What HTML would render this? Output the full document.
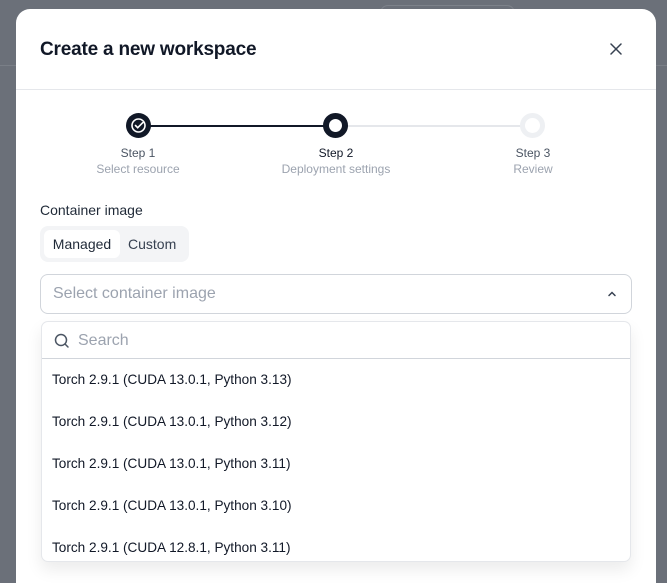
<!DOCTYPE html>
<html><head><style>
*{box-sizing:border-box;margin:0;padding:0}
html{overflow:hidden;width:667px;height:583px}
body{width:667px;height:583px;overflow:hidden;background:#6b7079;font-family:"Liberation Sans",sans-serif;position:relative}
.bgline{position:absolute;left:0;right:0;top:65px;height:1px;background:#7a7f87}
.bgbtn{position:absolute;left:380px;top:5px;width:135px;height:40px;border:1px solid #7d828a;border-radius:8px}
.modal{position:absolute;left:16px;top:9px;width:640px;height:574px;background:#fff;border-radius:14px 14px 0 0}
h1{position:absolute;left:24px;top:30px;font-size:19px;font-weight:bold;color:#111827;letter-spacing:-0.2px}
.close{position:absolute;left:594px;top:34px}
.hr{position:absolute;left:0;right:0;top:80px;height:1px;background:#e5e7eb}
.line{position:absolute;top:116px;height:2px}
.c{position:absolute;width:25px;height:25px;border-radius:50%;top:104px}
.lab{position:absolute;top:136px;width:160px;text-align:center;font-size:12px;line-height:16px;color:#6b7280}
.lab b{font-weight:normal;display:block}
.lab span{color:#9ca3af}
.cl{position:absolute;left:24px;top:193px;font-size:14px;color:#1f2937}
.tabs{position:absolute;left:24px;top:217px;width:149px;height:36px;background:#f3f4f6;border-radius:8px}
.t1{position:absolute;left:4px;top:4px;width:76px;height:28px;background:#fff;border-radius:6px;font-size:14px;color:#1f2937;line-height:28px;text-align:center}
.t2{position:absolute;left:88px;top:4px;font-size:14px;color:#374151;line-height:28px}
.sel{position:absolute;left:24px;top:265px;width:592px;height:40px;border:1px solid #d1d5db;border-radius:8px;font-size:16px;color:#9ca3af;padding-left:12px;line-height:38px}
.dd{position:absolute;left:25px;top:312px;width:590px;height:241px;background:#fff;border:1px solid #e5e7eb;border-radius:7px;box-shadow:0 8px 16px rgba(0,0,0,.08);overflow:hidden}
.srch{height:37px;border-bottom:1px solid #d1d5db;font-size:16px;color:#9ca3af;line-height:37px;padding-left:36px;position:relative}
.srch svg{position:absolute;left:12px;top:11px}
.it{height:42px;line-height:42px;font-size:13.6px;color:#111827;padding-left:10px}
</style></head><body>
<div class="bgbtn"></div><div class="bgline"></div>
<div class="modal">
<h1>Create a new workspace</h1>
<svg class="close" width="12" height="12" viewBox="0 0 12 12"><path d="M1 1L11 11M11 1L1 11" stroke="#374151" stroke-width="1.5" stroke-linecap="round"/></svg>
<div class="hr"></div>
<div class="line" style="left:123px;width:197px;background:#111827"></div>
<div class="line" style="left:320px;width:197px;background:#e5e7eb"></div>
<div class="c" style="left:110px;background:#111827"><svg width="25" height="25" viewBox="0 0 25 25"><circle cx="12.5" cy="12.5" r="6.5" fill="none" stroke="#fff" stroke-width="1.6"/><path d="M9.5 12.5l2.2 2.2 5-5" fill="none" stroke="#fff" stroke-width="1.6" stroke-linecap="round"/></svg></div>
<div class="c" style="left:307px;background:#fff;border:6px solid #111827"></div>
<div class="c" style="left:504px;background:#fff;border:5px solid #eef0f3"></div>
<div class="lab" style="left:42px"><b style="color:#4b5563">Step 1</b><span>Select resource</span></div>
<div class="lab" style="left:240px"><b style="color:#111827">Step 2</b><span>Deployment settings</span></div>
<div class="lab" style="left:437px"><b style="color:#4b5563">Step 3</b><span>Review</span></div>
<div class="cl">Container image</div>
<div class="tabs"><div class="t1">Managed</div><div class="t2">Custom</div></div>
<div class="sel">Select container image<svg style="position:absolute;right:14px;top:15px" width="10" height="8" viewBox="0 0 10 8"><path d="M2 5.5L5 2.5 8 5.5" fill="none" stroke="#374151" stroke-width="1.5" stroke-linecap="round"/></svg></div>
<div class="dd">
<div class="srch"><svg width="16" height="16" viewBox="0 0 16 16"><circle cx="7" cy="7" r="5.5" fill="none" stroke="#4b5563" stroke-width="1.5"/><path d="M11 11l3 3" stroke="#4b5563" stroke-width="1.5" stroke-linecap="round"/></svg>Search</div>
<div class="it">Torch 2.9.1 (CUDA 13.0.1, Python 3.13)</div>
<div class="it">Torch 2.9.1 (CUDA 13.0.1, Python 3.12)</div>
<div class="it">Torch 2.9.1 (CUDA 13.0.1, Python 3.11)</div>
<div class="it">Torch 2.9.1 (CUDA 13.0.1, Python 3.10)</div>
<div class="it">Torch 2.9.1 (CUDA 12.8.1, Python 3.11)</div>
</div>
</div>
</body></html>
